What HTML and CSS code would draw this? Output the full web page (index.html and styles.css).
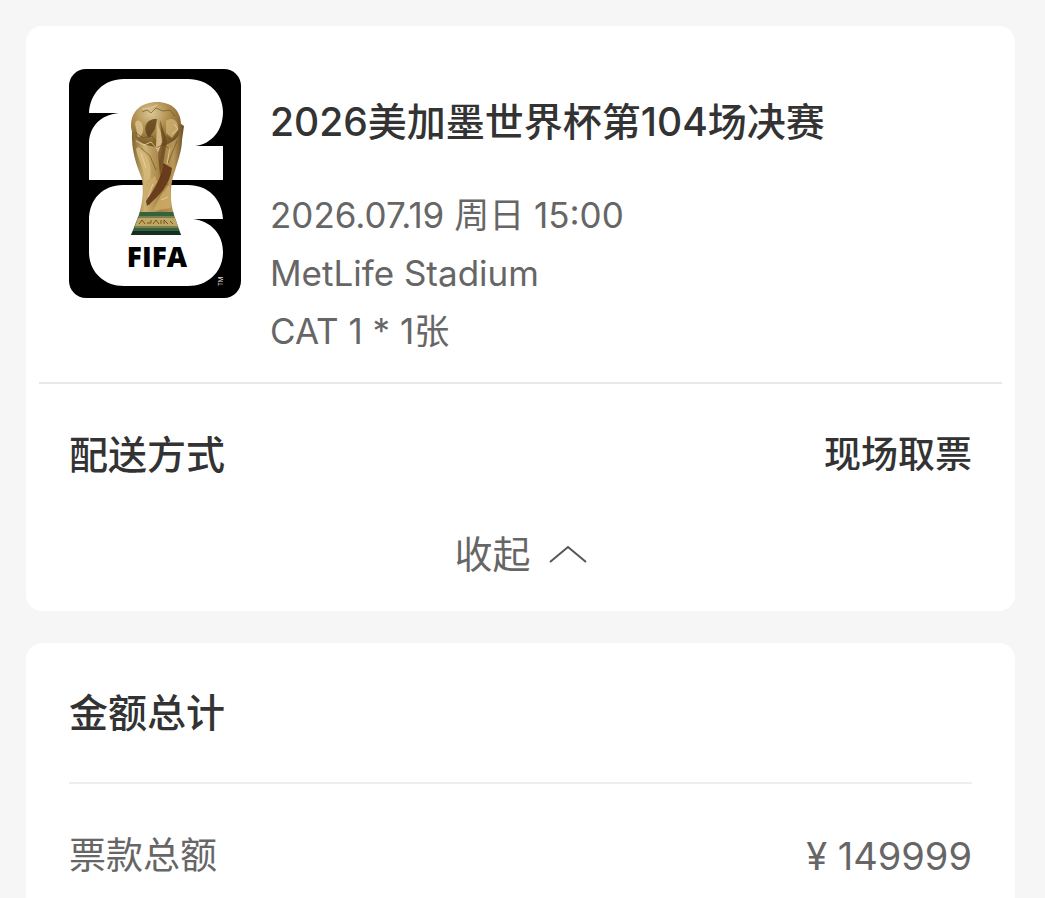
FILE: index.html
```html
<!DOCTYPE html>
<html lang="zh-CN">

<head>
    <meta charset="UTF-8">
    <meta name="viewport" content="width=device-width, initial-scale=1.0">
    <title>订单详情</title>
    <link rel="stylesheet" href="styles.css">
</head>

<body>
    <main class="page">
        <section class="card">
            <div class="event">
                <svg class="poster" viewBox="0 0 172 229" role="img" aria-label="FIFA 2026">
                    <defs>
                        <linearGradient id="gold" x1="0" x2="1" y1="0" y2="0">
                            <stop offset="0" stop-color="#80642f" />
                            <stop offset="0.25" stop-color="#cdb276" />
                            <stop offset="0.55" stop-color="#a4803f" />
                            <stop offset="0.8" stop-color="#b8965a" />
                            <stop offset="1" stop-color="#674b20" />
                        </linearGradient>
                        <radialGradient id="globe" cx="0.4" cy="0.25" r="0.75">
                            <stop offset="0" stop-color="#dcc795" />
                            <stop offset="0.5" stop-color="#ad8c4c" />
                            <stop offset="1" stop-color="#745623" />
                        </radialGradient>
                    </defs>
                    <rect width="172" height="229" rx="17" fill="#000" />
                    <!-- 2 -->
                    <path fill="#fff" d="M20 44C21 24 35 10 55 10H119C139 10 154 24 154 43C154 61 143 75 126 77H154V111H20V75C20 59 30 46 50 44Z" />
                    <!-- 6 -->
                    <path fill="#fff" d="M54 116H119C139 116 153 130 154 150H124C142 152 154 165 154 183C154 203 139 217 119 217H55C35 217 20 203 20 183V151C20 130 34 116 54 116Z" />
                    <!-- trophy -->
                    <path fill="url(#gold)" d="M63 62C62 83 68 97 73 110C75 125 73 135 70 145H105C101 134 101 120 104 108C108 95 113 82 113 71L115 57L111 54L107 66L68 63Z" />
                    <path fill="url(#globe)" d="M88 33C103 33 112 42 112 56C112 68 103 76 88 78C73 77 62 69 62 56C62 42 73 33 88 33Z" />
                    <path fill="#5b3d16" opacity="0.8" d="M78 66C73 56 80 49 88 50L86 60L80 69Z" />
                    <path fill="#ddc68e" d="M66 55C67 49 73 51 74 58C75 64 72 68 69 68Z" opacity="0.8" />
                    <path fill="#d3b779" d="M69 78C77 83 84 94 81 110L76 112C75 99 69 90 67 80Z" />
                    <path fill="#d1b073" d="M97 52C104 47 110 52 109 61L103 69L97 64Z" opacity="0.8" />
                    <path fill="#d4b881" d="M88 52L94 70L91 91L87 78Z" />
                    <path fill="#67451d" d="M91 51L98 72L94 95L91 107L89 84L93 73Z" opacity="0.75" />
                    <path fill="#623416" d="M103 99C101 116 90 127 78 137L77 132C86 119 93 108 94 94Z" opacity="0.9" />
                    <path fill="#d0ac69" d="M76 114L86 107L88 113L77 127ZM92 126L101 115L102 139L84 142Z" opacity="0.8" />
                    <path fill="none" stroke="#68491f" stroke-width="1" opacity="0.6" d="M73 43L78 41L82 44L87 39L94 42L101 41L106 47M66 63L74 69L83 67L87 73M96 67L104 72L110 65M72 79L81 87L87 101M108 72L99 94M81 74L87 79L95 75L101 81M80 136L96 112L99 116" />
                    <path fill="none" stroke="#e8d4a0" stroke-width="1" opacity="0.8" d="M73 40L82 39L88 36M67 72L75 76L82 73L88 80M105 55L109 60L103 65M72 84L77 99M101 79L98 95M84 115L79 128M92 131L99 128" />
                    <path fill="#34623c" d="M71 143H104L112 166H62Z" />
                    <path fill="#c2a763" d="M69 149H106L109 157H66Z" />
                    <path fill="#172e21" d="M64 162H110L112 166H62Z" />
                    <path fill="none" stroke="#705323" stroke-width="1" d="M70 155L73 151L76 155M78 154H82V151M84 155L87 151L90 155M92 151V155M95 155V151L99 155M101 152L104 155" />
                    <path fill="none" stroke="#b8a062" stroke-width="1" d="M70 148H106M66 158H109" />
                    <text class="poster-name" x="88" y="198" text-anchor="middle">FIFA</text>
                    <text class="poster-mark" transform="translate(154 217) rotate(-90)">TM</text>
                </svg>
                <div class="event-info">
                    <h1>2026美加墨世界杯第104场决赛</h1>
                    <p>2026.07.19 周日 15:00</p>
                    <p>MetLife Stadium</p>
                    <p class="seat">CAT 1 * 1张</p>
                </div>
            </div>
            <div class="delivery">
                <h2>配送方式</h2>
                <span class="delivery-value">现场取票</span>
            </div>
            <button type="button" class="toggle">
                收起
                <svg class="arrow" viewBox="0 0 38 18" aria-hidden="true">
                    <path d="M1 17L19 2L37 17" />
                </svg>
            </button>
        </section>

        <section class="card card-total">
            <h2>金额总计</h2>
            <div class="amount">
                <span>票款总额</span>
                <span class="price">¥ 149999</span>
            </div>
        </section>
    </main>
</body>

</html>
```

FILE: styles.css
```css
* {
    box-sizing: border-box;
}

body {
    margin: 0;
    background-color: #f6f6f6;
    color: #333;
    font-family: Inter, "Noto Sans CJK SC", sans-serif;
}

h1,
h2,
p {
    margin: 0;
}

h1,
h2 {
    color: #333;
    font-size: 39px;
    font-weight: 500;
    line-height: 58px;
}

.page {
    display: flex;
    flex-direction: column;
    gap: 32px;
    min-height: 100vh;
    padding: 26px 30px 0 26px;
}

.card {
    background-color: #fff;
    border-radius: 16px;
}

.event {
    display: flex;
    gap: 29px;
    margin: 0 13px;
    padding: 43px 30px 22px;
    border-bottom: 2px solid #e8e8e8;
}

.poster {
    flex: none;
    width: 172px;
    height: 229px;
}

.poster-name {
    font-family: "Open Sans", sans-serif;
    font-size: 28px;
    font-weight: 800;
}

.poster-mark {
    fill: #ddd;
    font-size: 6px;
}

.event-info {
    padding-top: 24px;
    color: #666;
    font-size: 35px;
    line-height: 58px;
}

.event-info h1 {
    margin-bottom: 35px;
}

.seat {
    font-variant-ligatures: no-contextual;
}

.delivery {
    display: flex;
    justify-content: space-between;
    padding: 42px 43px 0;
}

.delivery-value {
    font-size: 37px;
    font-weight: 500;
    line-height: 58px;
}

.toggle {
    display: flex;
    align-items: center;
    justify-content: center;
    gap: 18px;
    width: 100%;
    padding: 41px 0 28px;
    border: none;
    background: none;
    color: #666;
    font-family: inherit;
    font-size: 38px;
    line-height: 58px;
    cursor: pointer;
}

.arrow {
    width: 38px;
    height: 18px;
    fill: none;
    stroke: #555;
    stroke-width: 2;
}

.card-total {
    flex: 1;
    padding: 41px 43px 0;
    border-radius: 16px 16px 0 0;
}

.card-total h2 {
    padding-bottom: 40px;
    border-bottom: 2px solid #eee;
}

.amount {
    display: flex;
    justify-content: space-between;
    padding-top: 43px;
    color: #666;
    font-size: 37px;
    line-height: 58px;
}

.price {
    font-size: 38px;
}
```
